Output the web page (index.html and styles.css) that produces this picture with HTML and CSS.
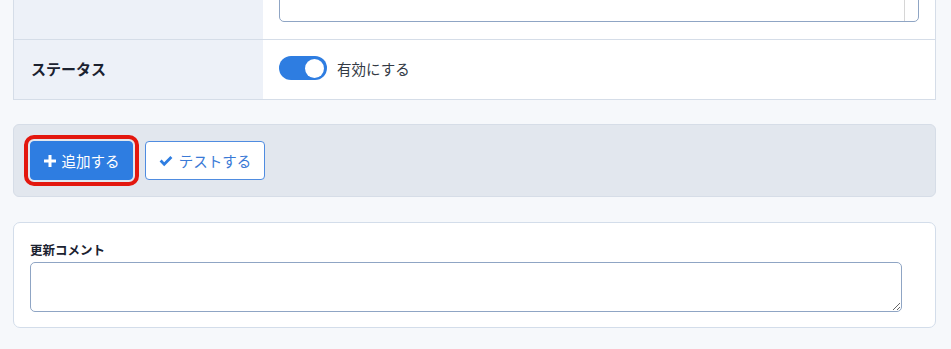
FILE: index.html
```html
<!DOCTYPE html>
<html lang="ja">
<head>
<meta charset="UTF-8">
<meta name="viewport" content="width=device-width, initial-scale=1.0">
<title>設定</title>
<link rel="stylesheet" href="styles.css">
</head>
<body>
<!-- 設定テーブル -->
<div class="form-table">
<div class="row row-first">
<div class="cell-label"></div>
<div class="cell-value">
<textarea class="field field-top"></textarea>
</div>
</div>
<div class="row row-status">
<div class="cell-label">ステータス</div>
<div class="cell-value">
<label class="switch">
<span class="track"><span class="knob"></span></span>
有効にする
</label>
</div>
</div>
</div>

<!-- 操作ボタン -->
<div class="actions">
<button class="btn btn-primary">
<svg class="icon" viewBox="0 0 12 12">
<path d="M4.5 0h3v4.5H12v3H7.5V12h-3V7.5H0v-3h4.5z"/>
</svg>
追加する
</button>
<button class="btn btn-outline">
<svg class="icon" viewBox="0 0 14 12">
<path d="M0.6 6.6l2-2 2.6 2.6L11.4 1l2 2-8.2 8.2z"/>
</svg>
テストする
</button>
</div>

<!-- 更新コメント -->
<div class="comment-card">
<div class="comment-label">更新コメント</div>
<textarea class="field field-comment"></textarea>
</div>
</body>
</html>
```

FILE: styles.css
```css
/* ページ全体 */
body {
margin: 0;
padding: 0 15px 0 13px;
background-color: #f6f8fb;
font-family: "Noto Sans CJK JP", "Noto Sans", sans-serif;
color: #1e2836;
}

/* 設定テーブル */
.form-table {
margin-top: -40px;
border: 1px solid #d5dde8;
border-top: none;
background-color: #fff;
}

.row {
display: flex;
border-top: 1px solid #d5dde8;
height: 59px;
}

.row-first {
border-top: none;
height: 79px;
}

.row-status .cell-label,
.row-status .cell-value {
padding-bottom: 3px;
}

.cell-label {
width: 249px;
flex-shrink: 0;
background-color: #edf1f8;
padding-left: 17px;
display: flex;
align-items: center;
font-size: 15px;
font-weight: bold;
color: #1b2230;
box-sizing: border-box;
}

.cell-value {
flex: 1;
padding: 0 16px;
display: flex;
align-items: center;
}

.row-first .cell-value {
align-items: flex-start;
}

/* テキストエリア */
.field {
display: block;
width: 100%;
box-sizing: border-box;
border: 1px solid #8fa5c4;
border-radius: 5px;
background-color: #fff;
font-family: inherit;
}

/* スクロールバーの区切り線 */
.field-top {
height: 62px;
resize: none;
background-image: linear-gradient(to left, transparent 13px, #d6d6d6 13px, #d6d6d6 14px, transparent 14px);
}

/* トグルスイッチ */
.switch {
display: flex;
align-items: center;
gap: 10px;
font-size: 14.5px;
color: #333a45;
}

.track {
width: 48px;
height: 24px;
border-radius: 12px;
background-color: #2e7de1;
display: flex;
align-items: center;
justify-content: flex-end;
padding-right: 3px;
box-sizing: border-box;
}

.knob {
width: 19px;
height: 19px;
border-radius: 50%;
background-color: #fff;
}

/* 操作ボタン */
.actions {
margin-top: 24px;
height: 73px;
box-sizing: border-box;
padding: 16px 16px;
background-color: #e2e7ee;
border: 1px solid #d6dde7;
border-radius: 6px;
display: flex;
gap: 12px;
align-items: flex-start;
}

.btn {
height: 39px;
padding: 0;
border-radius: 4px;
display: flex;
align-items: center;
justify-content: center;
gap: 6px;
font-family: inherit;
font-size: 14.5px;
white-space: nowrap;
cursor: pointer;
}

.btn-primary {
width: 103px;
background-color: #2e7de1;
border: 1px solid #2e7de1;
color: #fff;
outline: 4px solid #e3170e;
outline-offset: 2px;
}

.btn-outline {
width: 120px;
background-color: #fff;
border: 1px solid #4f8ce0;
color: #3a7ad6;
}

.icon {
width: 12px;
height: 12px;
fill: currentColor;
}

.btn-outline .icon {
width: 14px;
fill: #2e7de1;
}

/* 更新コメント */
.comment-card {
margin-top: 25px;
background-color: #fff;
border: 1px solid #d3ddea;
border-radius: 7px;
padding: 17px 33px 15px 16px;
}

.comment-label {
font-size: 12.5px;
font-weight: bold;
color: #1b2230;
margin-bottom: 3px;
}

.field-comment {
height: 50px;
}
```
